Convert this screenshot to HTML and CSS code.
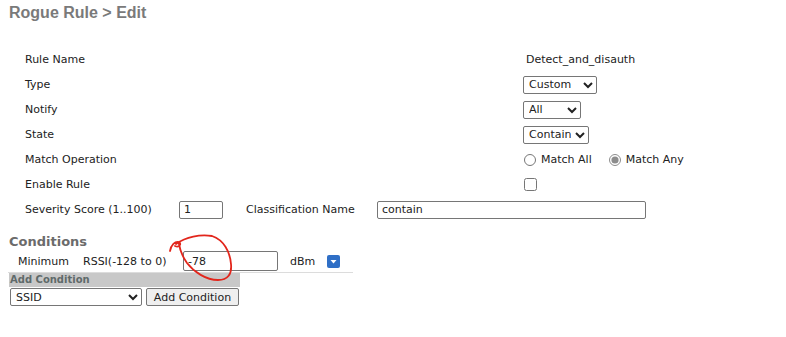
FILE: index.html
```html
<!DOCTYPE html>
<html lang="en">
<head>
    <meta charset="UTF-8">
    <meta name="viewport" content="width=device-width, initial-scale=1.0">
    <title>Rogue Rule &gt; Edit</title>
    <link rel="stylesheet" href="styles.css">
</head>
<body>
    <div class="page">
        <h1 class="title">Rogue Rule &gt; Edit</h1>

        <div class="rule-form">
            <div class="row">
                <span class="label">Rule Name</span>
                <span class="value text-value">Detect_and_disauth</span>
            </div>
            <div class="row">
                <span class="label">Type</span>
                <select class="sel sel-type">
                    <option>Custom</option>
                    <option>Friendly</option>
                    <option>Malicious</option>
                </select>
            </div>
            <div class="row">
                <span class="label">Notify</span>
                <select class="sel sel-notify">
                    <option>All</option>
                    <option>Global</option>
                    <option>Local</option>
                    <option>None</option>
                </select>
            </div>
            <div class="row">
                <span class="label">State</span>
                <select class="sel sel-state">
                    <option>Contain</option>
                    <option>Alert</option>
                    <option>Delete</option>
                </select>
            </div>
            <div class="row">
                <span class="label">Match Operation</span>
                <label class="radio"><input type="radio" name="match"> Match All</label>
                <label class="radio"><input type="radio" name="match" checked> Match Any</label>
            </div>
            <div class="row">
                <span class="label">Enable Rule</span>
                <input type="checkbox" class="check">
            </div>
            <div class="row">
                <span class="label label-score">Severity Score (1..100)</span>
                <input type="text" class="field field-score" value="1">
                <span class="label-class">Classification Name</span>
                <input type="text" class="field field-class" value="contain">
            </div>
        </div>

        <div class="conditions">
            <h2 class="cond-title">Conditions</h2>
            <div class="cond-row">
                <span class="cond-min">Minimum</span>
                <span class="cond-name">RSSI(-128 to 0)</span>
                <input type="text" class="field field-rssi" value="-78">
                <span class="cond-unit">dBm</span>
                <span class="cond-menu">
                    <svg width="13" height="13" viewBox="0 0 13 13">
                        <rect x="0" y="0" width="13" height="13" rx="2" fill="#2f6fc6"/>
                        <path d="M3.5 5 L9.5 5 L6.5 8.5 Z" fill="#fff"/>
                    </svg>
                </span>
            </div>
            <div class="add-bar">Add Condition</div>
            <div class="add-row">
                <select class="sel sel-cond">
                    <option>SSID</option>
                    <option>Duration</option>
                    <option>Encryption</option>
                </select>
                <button type="button" class="btn">Add Condition</button>
            </div>
        </div>

        <!-- red pen mark around the RSSI value -->
        <svg class="scribble" width="786" height="337" viewBox="0 0 786 337">
            <path d="M170 251 C171 245 175 241 179 242 C182 244 179 248 175 246
                     M176 244 C186 237 200 234 212 236 C224 240 230 252 231 264
                     C232 274 228 280 218 280 C206 280 194 272 187 263
                     C182 256 180 250 179 244"
                  fill="none" stroke="#e2261c" stroke-width="1.8" stroke-linecap="round"/>
        </svg>
    </div>
</body>
</html>
```

FILE: styles.css
```css
body {
    margin: 0;
    background-color: #fff;
    font-family: "DejaVu Sans", Verdana, sans-serif;
    font-size: 11px;
    color: #222;
}

.page {
    position: relative;
    padding: 0 9px;
    width: 786px;
    height: 337px;
    box-sizing: border-box;
}

.title {
    margin: 0;
    padding-top: 3px;
    font-family: "Liberation Sans", Arial, sans-serif;
    font-size: 16px;
    line-height: 20px;
    font-weight: bold;
    color: #7a7a7a;
}

.rule-form {
    margin-top: 24px;
}

.row {
    display: flex;
    align-items: center;
    height: 25px;
}

.label {
    width: 514px;
    padding-left: 16px;
    box-sizing: border-box;
}

.text-value {
    padding-left: 3px;
}

.sel {
    height: 18px;
    margin: 0;
    font-family: "DejaVu Sans", Verdana, sans-serif;
    font-size: 11px;
    color: #222;
    background-color: #fff;
    border: 1px solid #767676;
    border-radius: 2px;
    padding: 0 1px;
}

.sel-type { width: 74px; }
.sel-notify { width: 58px; }
.sel-state { width: 66px; }
.sel-cond { width: 132px; }

.radio {
    display: flex;
    align-items: center;
    margin-right: 16px;
}

.radio input {
    width: 12px;
    height: 12px;
    margin: 0 5px 0 1px;
    accent-color: #8c8c8c;
}

.check {
    width: 13px;
    height: 13px;
    margin: 0 0 0 1px;
}

.label-score {
    width: 170px;
}

.field {
    height: 18px;
    margin: 0;
    padding: 0 4px;
    box-sizing: border-box;
    font-family: "DejaVu Sans", Verdana, sans-serif;
    font-size: 11px;
    color: #222;
    border: 1px solid #767676;
    border-radius: 2px;
}

.field-score { width: 44px; }

.label-class {
    width: 131px;
    margin-left: 23px;
}

.field-class { width: 269px; }

.conditions {
    margin-top: 12px;
}

.cond-title {
    margin: 0;
    font-size: 13px;
    line-height: 16px;
    font-weight: bold;
    color: #6b6b6b;
}

.cond-row {
    display: flex;
    align-items: center;
    width: 335px;
    height: 22px;
    margin-left: -1px;
    padding-left: 10px;
    border-bottom: 1px solid #dcdcdc;
}

.cond-min { width: 65px; }
.cond-name { width: 100px; }

.field-rssi {
    width: 95px;
    height: 20px;
}

.cond-unit {
    margin-left: 12px;
    width: 37px;
}

.cond-menu {
    display: flex;
}

.add-bar {
    width: 231px;
    height: 14px;
    line-height: 14px;
    background-color: #c8c8c8;
    font-size: 10px;
    font-weight: bold;
    color: #5f6a6a;
    padding-left: 1px;
    box-sizing: border-box;
}

.add-row {
    display: flex;
    align-items: flex-start;
    margin-top: 1px;
    padding-left: 1px;
}

.btn {
    height: 18px;
    width: 93px;
    margin-left: 4px;
    padding: 0;
    font-family: "DejaVu Sans", Verdana, sans-serif;
    font-size: 11px;
    color: #222;
    background-color: #efefef;
    border: 1px solid #767676;
    border-radius: 2px;
}

.scribble {
    position: absolute;
    top: 0;
    left: 0;
    pointer-events: none;
}
```
